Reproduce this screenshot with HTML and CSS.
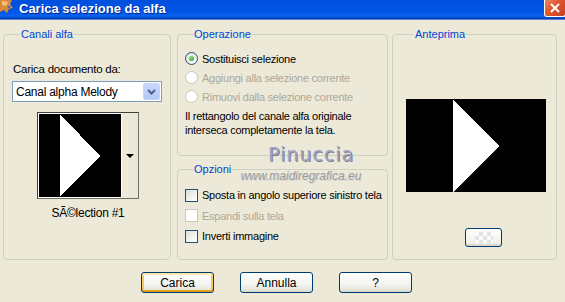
FILE: index.html
```html
<!DOCTYPE html>
<html lang="it">
<head>
  <meta charset="UTF-8">
  <title>Carica selezione da alfa</title>
  <link rel="stylesheet" href="styles.css">
</head>
<body>

  <div class="window">
    <div class="titlebar">
      <svg class="app-icon" width="15" height="15" viewBox="0 0 15 15">
        <path d="M0 0 H12 L10 4 L13 8 L9 9 L7 13 L4 10 L0 12 Z" fill="#d98b3a"/>
        <path d="M2 1 L8 2 L6 6 L2 5 Z" fill="#f4c27a"/>
        <path d="M7 6 L11 6 L9 9 Z" fill="#3b6fd1"/>
      </svg>
      <span class="title">Carica selezione da alfa</span>
      <span class="close">
        <svg width="12" height="12" viewBox="0 0 12 12">
          <path d="M2 2 L10 10 M10 2 L2 10" stroke="#fff" stroke-width="2"/>
        </svg>
      </span>
    </div>

    <div class="content">
      <div class="panels">

        <fieldset class="group group-alpha">
          <legend>Canali alfa</legend>
          <div class="field-label">Carica documento da:</div>
          <div class="combo">
            <span class="combo-text">Canal alpha Melody</span>
            <span class="combo-btn">
              <svg width="9" height="6" viewBox="0 0 9 6">
                <path d="M1 1 L4.5 4.5 L8 1" fill="none" stroke="#4d6185" stroke-width="2"/>
              </svg>
            </span>
          </div>
          <div class="thumb">
            <svg class="thumb-pic" width="82" height="83" viewBox="0 0 82 83" shape-rendering="crispEdges">
              <rect width="82" height="83" fill="#000"/>
              <polygon points="21,0 61,42 21,83" fill="#fff"/>
            </svg>
            <span class="thumb-btn"><span class="arrow"></span></span>
          </div>
          <div class="thumb-label">SÃ©lection #1</div>
        </fieldset>

        <div class="col-mid">
          <fieldset class="group group-op">
            <legend>Operazione</legend>
            <div class="opt-row"><span class="radio checked"></span>Sostituisci selezione</div>
            <div class="opt-row disabled"><span class="radio"></span>Aggiungi alla selezione corrente</div>
            <div class="opt-row disabled"><span class="radio"></span>Rimuovi dalla selezione corrente</div>
            <p class="note">Il rettangolo del canale alfa originale interseca completamente la tela.</p>
          </fieldset>

          <fieldset class="group group-opt">
            <legend>Opzioni</legend>
            <div class="chk-row"><span class="check"></span>Sposta in angolo superiore sinistro tela</div>
            <div class="chk-row disabled"><span class="check"></span>Espandi sulla tela</div>
            <div class="chk-row"><span class="check"></span>Inverti immagine</div>
          </fieldset>
        </div>

        <fieldset class="group group-preview">
          <legend>Anteprima</legend>
          <svg class="preview-pic" width="140" height="93" viewBox="0 0 140 93" shape-rendering="crispEdges">
            <rect width="140" height="93" fill="#000"/>
            <polygon points="47,0 93,47 47,93" fill="#fff"/>
          </svg>
          <span class="mini-btn"><span class="checker"></span></span>
        </fieldset>

      </div>

      <div class="actions">
        <button class="btn default">Carica</button>
        <button class="btn">Annulla</button>
        <button class="btn">?</button>
      </div>

      <div class="watermark">
        <div class="wm-name">Pinuccia</div>
        <div class="wm-site">www.maidiregrafica.eu</div>
      </div>
    </div>
  </div>

</body>
</html>
```

FILE: styles.css
```css
* {
  box-sizing: border-box;
}

body {
  margin: 0;
  background: #ece9d8;
  font-family: 'Liberation Sans', Arial, sans-serif;
  font-size: 11px;
  color: #000;
}

.window {
  width: 565px;
  height: 302px;
  overflow: hidden;
  background: #ece9d8;
}

/* title bar */
.titlebar {
  height: 20px;
  display: flex;
  align-items: flex-start;
  background: linear-gradient(to bottom, #0050de 0%, #0055e5 60%, #0a64f2 85%, #0046c0 95%, #00319a 100%);
  border-bottom: 1px solid #5b7fd6;
}

.app-icon {
  flex: none;
}

.title {
  margin-left: 4px;
  margin-top: 1px;
  color: #fff;
  font-weight: bold;
  font-size: 13px;
  line-height: 15px;
  text-shadow: 1px 1px 0 #0a1e8c;
}

.close {
  margin-left: auto;
  width: 22px;
  height: 18px;
  margin-top: -1px;
  margin-right: -1px;
  display: flex;
  align-items: center;
  justify-content: center;
  border: 1px solid #fff;
  border-top: none;
  border-radius: 0 0 3px 3px;
  background: linear-gradient(135deg, #e98a6a 0%, #e2552f 45%, #c6401e 100%);
}

/* body */
.content {
  position: relative;
  padding-top: 8px;
}

.panels {
  display: flex;
  align-items: flex-start;
  padding-left: 3px;
  height: 232px;
  letter-spacing: -0.25px;
}

.group {
  margin: 0;
  padding: 0;
  min-width: 0;
  border: 1px solid #d0d0bf;
  border-radius: 4px;
}

.group legend {
  margin-left: 8px;
  padding: 0 1px;
  color: #0046d5;
  line-height: 13px;
  letter-spacing: 0;
}

.group-alpha {
  width: 168px;
  height: 232px;
  margin-right: 6px;
  padding-left: 8px;
}

.col-mid {
  width: 211px;
  display: flex;
  flex-direction: column;
  margin-right: 4px;
}

.group-op {
  height: 128px;
  padding-left: 7px;
}

.group-opt {
  height: 97px;
  margin-top: 7px;
  padding-left: 7px;
}

.group-preview {
  width: 165px;
  height: 232px;
  padding-left: 13px;
}

/* left panel */
.field-label {
  margin-top: 22px;
  line-height: 13px;
  padding-left: 1px;
  font-size: 11.5px;
}

.combo {
  margin-top: 5px;
  width: 150px;
  height: 21px;
  display: flex;
  align-items: center;
  background: #fff;
  border: 1px solid #7f9db9;
}

.combo-text {
  flex: 1;
  padding-left: 3px;
  font-size: 12px;
}

.combo-btn {
  width: 17px;
  height: 17px;
  margin-right: 1px;
  display: flex;
  align-items: center;
  justify-content: center;
  border-radius: 2px;
  background: linear-gradient(to bottom, #c9d9fc, #b2c8f6);
  border: 1px solid #c3d3fd;
}

.thumb {
  margin-top: 10px;
  margin-left: 25px;
  width: 102px;
  height: 87px;
  display: flex;
  background: #fff;
  border: 1px solid;
  border-color: #404040 #716f64 #716f64 #404040;
  padding: 1px 0 1px 1px;
}

.thumb-pic {
  display: block;
}

.thumb-btn {
  flex: 1;
  margin-top: -1px;
  margin-bottom: -1px;
  display: flex;
  align-items: center;
  justify-content: center;
  background: #ece9d8;
  border-left: 1px solid #fff;
}

.arrow {
  width: 0;
  height: 0;
  border-left: 4px solid transparent;
  border-right: 4px solid transparent;
  border-top: 4px solid #000;
}

.thumb-label {
  margin-top: 8px;
  margin-left: 25px;
  width: 102px;
  text-align: center;
  font-size: 12px;
  line-height: 13px;
}

/* operazione / opzioni */
.opt-row {
  height: 19px;
  display: flex;
  align-items: center;
  white-space: nowrap;
}

.opt-row:first-of-type {
  margin-top: 8px;
}

.radio {
  flex: none;
  width: 13px;
  height: 13px;
  margin-right: 4px;
  border-radius: 50%;
  border: 1px solid #1c5180;
  background: radial-gradient(circle at 70% 70%, #fff 0%, #f0f0ea 50%, #dcdcd7 100%);
  display: flex;
  align-items: center;
  justify-content: center;
}

.radio.checked::after {
  content: "";
  width: 5px;
  height: 5px;
  border-radius: 50%;
  background: radial-gradient(circle at 35% 35%, #7be37b, #1e9b1e);
}

.disabled {
  color: #aca899;
}

.disabled .radio,
.disabled .check {
  border-color: #cac8bb;
  background: #fff;
}

.note {
  margin: 3px 0 0 0;
  width: 198px;
  line-height: 14px;
}

.chk-row {
  height: 20.5px;
  display: flex;
  align-items: center;
  white-space: nowrap;
}

.chk-row:first-of-type {
  margin-top: 9px;
}

.check {
  flex: none;
  width: 13px;
  height: 13px;
  margin-right: 4px;
  border: 1px solid #1c5180;
  background: linear-gradient(135deg, #dcdcd7 0%, #f4f4f0 60%, #fff 100%);
}

/* anteprima */
.preview-pic {
  display: block;
  margin-top: 58px;
}

.mini-btn {
  display: flex;
  align-items: center;
  justify-content: center;
  width: 37px;
  height: 19px;
  margin-top: 36px;
  margin-left: 59px;
  border: 1px solid #003c74;
  border-radius: 3px;
  background: linear-gradient(to bottom, #fff, #f0f0ea 80%, #d6d0c5);
}

.checker {
  width: 18px;
  height: 12px;
  background:
    conic-gradient(#e4e4e4 25%, #fafafa 0 50%, #e4e4e4 0 75%, #fafafa 0) 0 0 / 8px 8px;
}

/* buttons */
.actions {
  display: flex;
  gap: 26px;
  padding-left: 141px;
  margin-top: 12px;
}

.btn {
  width: 73px;
  height: 21px;
  padding: 0;
  font-family: inherit;
  font-size: 12px;
  color: #000;
  border: 1px solid #003c74;
  border-radius: 3px;
  background: linear-gradient(to bottom, #fff 0%, #f4f4f0 60%, #e6e3d8 90%, #d6d0c5 100%);
}

.btn.default {
  box-shadow:
    inset 0 2px 0 #ffe8a8,
    inset 0 -2px 0 #e5a01a,
    inset 2px 0 0 #f8c860,
    inset -2px 0 0 #f8c860;
}

/* watermark over the dialog */
.watermark {
  position: absolute;
  left: 238px;
  top: 124px;
  width: 126px;
  text-align: center;
  pointer-events: none;
}

.wm-name {
  font-family: 'DejaVu Sans', sans-serif;
  font-size: 19px;
  line-height: 20px;
  letter-spacing: 1px;
  color: #a4a4c0;
  text-shadow: 1px 1px 0 #7a7a98;
  padding-left: 20px;
}

.wm-site {
  margin-top: 5px;
  font-size: 12px;
  font-style: italic;
  color: #9a9a9a;
  text-shadow: 1px 1px 0 #d8d8d8;
}
```
